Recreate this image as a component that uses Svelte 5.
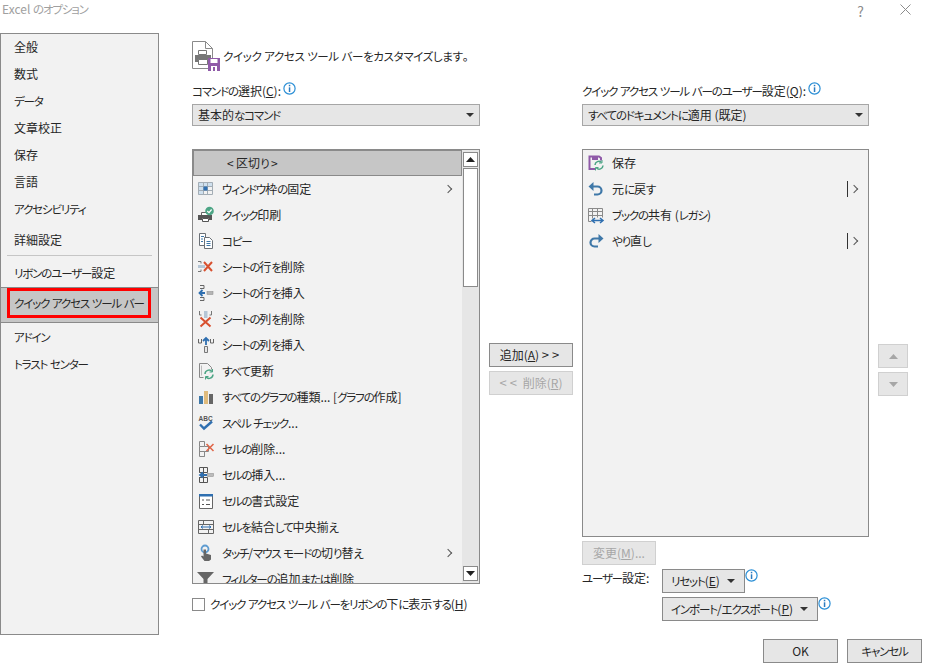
<script>
    const nav = [
        { label: '全般' },
        { label: '数式' },
        { label: 'データ' },
        { label: '文章校正' },
        { label: '保存' },
        { label: '言語' },
        { label: 'アクセシビリティ' },
        { label: '詳細設定', cls: 'gap-top' },
    ];
    const nav2 = [
        { label: 'リボンのユーザー設定' },
        { label: 'クイック アクセス ツール バー', active: true },
        { label: 'アドイン' },
        { label: 'トラスト センター' },
    ];

    const commands = [
        { icon: 'freeze', label: 'ウィンドウ枠の固定', more: true },
        { icon: 'print', label: 'クイック印刷' },
        { icon: 'copy', label: 'コピー' },
        { icon: 'delrow', label: 'シートの行を削除' },
        { icon: 'insrow', label: 'シートの行を挿入' },
        { icon: 'delcol', label: 'シートの列を削除' },
        { icon: 'inscol', label: 'シートの列を挿入' },
        { icon: 'refresh', label: 'すべて更新' },
        { icon: 'chart', label: 'すべてのグラフの種類... [グラフの作成]' },
        { icon: 'spell', label: 'スペル チェック...' },
        { icon: 'delcell', label: 'セルの削除...' },
        { icon: 'inscell', label: 'セルの挿入...' },
        { icon: 'format', label: 'セルの書式設定' },
        { icon: 'merge', label: 'セルを結合して中央揃え' },
        { icon: 'touch', label: 'タッチ/マウス モードの切り替え', more: true },
        { icon: 'filter', label: 'フィルターの追加または削除' },
    ];

    const toolbar = [
        { icon: 'savesync', label: '保存' },
        { icon: 'undo', label: '元に戻す', split: true },
        { icon: 'share', label: 'ブックの共有 (レガシ)' },
        { icon: 'redo', label: 'やり直し', split: true },
    ];

    // kana runs get set a bit narrower than the kanji around them
    function parts(text) {
        return text.split(/([\u3040-\u30ff]+)/).filter(Boolean);
    }
    const isKana = (s) => /^[\u3040-\u30ff]/.test(s);
</script>

{#snippet k(text)}{#each parts(text) as part}{#if isKana(part)}<span class="kana">{part}</span>{:else}{part}{/if}{/each}{/snippet}

{#snippet info()}
    <svg class="info" width="13" height="13" viewBox="0 0 13 13">
        <circle cx="6.500" cy="6.500" r="5.600" fill="#fff" stroke="#2b8fd6" stroke-width="1.200" />
        <rect x="5.800" y="2.800" width="1.500" height="1.500" fill="#2b7cc0" />
        <rect x="5.800" y="5.300" width="1.500" height="4.700" fill="#2b7cc0" />
    </svg>
{/snippet}

{#snippet caret()}
    <svg class="caret" width="8" height="4" viewBox="0 0 8 4"><path d="M0 0h8L4 4z" fill="#333" /></svg>
{/snippet}

{#snippet icon(name)}
    <svg class="ico" width="18" height="18" viewBox="0 0 18 18" fill="none">
        {#if name === 'freeze'}
            <path d="M1 2h15v4H1zM1 6h5v9H1z" fill="#cfe0ee" />
            <path d="M1.500 2.500h14v12h-14zM1.500 6.500h14M1.500 10.500h14M6.500 2.500v12M10.500 2.500v12" stroke="#a3adb5" />
            <rect x="6.500" y="6.500" width="4" height="4" fill="#2f6fb0" />
        {:else if name === 'print'}
            <path d="M4.500 6.500h7v3h-7z" fill="#fff" stroke="#666" />
            <path d="M1 9h14v5h-3v-2H5v2H1z" fill="#555" />
            <path d="M5.500 12.500h6v3h-6z" fill="#fff" stroke="#555" />
            <circle cx="12.500" cy="5" r="4.300" fill="#4ca585" />
            <path d="M10.300 5l1.700 1.700 2.600-3.200" stroke="#fff" stroke-width="1.200" />
        {:else if name === 'copy'}
            <path d="M2.500 1.500h6v12h-6z" fill="#fff" stroke="#6b7076" />
            <path d="M7.500 5.500h5l3 3v8h-8z" fill="#fff" stroke="#6b7076" />
            <path d="M4 4.500h3M4 7h2M4 9.500h2M9.500 9.500h4M9.500 11.500h4M9.500 13.500h4" stroke="#3f78a8" />
        {:else if name === 'delrow'}
            <path d="M1 3.500h3v2M1 13.500h3v-2" stroke="#777" />
            <rect x="1" y="7" width="7" height="3" fill="#b5c6d6" />
            <path d="M7 4l8 9M15 4l-8 9" stroke="#d8502f" stroke-width="2" />
        {:else if name === 'insrow'}
            <path d="M3 1.500h4v3H3M3 16.500h4v-3H3" stroke="#666" />
            <path d="M2 9h6M5.500 6l-3 3 3 3" stroke="#2f6fb0" stroke-width="1.800" />
            <rect x="10" y="7.500" width="6" height="3" fill="#b5b5b5" stroke="#888" stroke-width=".5" />
        {:else if name === 'delcol'}
            <path d="M2.500 1v4h2M14.500 1v4h-2" stroke="#777" />
            <rect x="7" y="1" width="3.500" height="7" fill="#b5c6d6" />
            <path d="M3.500 7.500l10 9M13.500 7.500l-10 9" stroke="#d8502f" stroke-width="2" />
        {:else if name === 'inscol'}
            <path d="M1.500 3v4h3V3M13.500 3v4h3V3" stroke="#666" />
            <path d="M9 9V2M6 5l3-3 3 3" stroke="#2f6fb0" stroke-width="1.800" />
            <path d="M7.500 10.500h3v6h-3z" fill="#e6e6e6" stroke="#777" />
        {:else if name === 'refresh'}
            <path d="M2.500 1.500h8l4 4v2M2.500 1.500v14h4" stroke="#888" />
            <path d="M4.500 3.500v10" stroke="#bbb" />
            <path d="M8 12a4 4 0 0 1 7-2.500M16 12.500a4 4 0 0 1-7 2.500" stroke="#4ca585" stroke-width="1.500" />
            <path d="M15.500 7v3h-3M8.500 17.500v-3h3" stroke="#4ca585" />
        {:else if name === 'chart'}
            <rect x="2" y="8" width="4" height="8" fill="#3f78a8" />
            <rect x="7" y="3" width="4" height="13" fill="#e0bb7c" />
            <rect x="12" y="6" width="4" height="10" fill="#666" />
        {:else if name === 'spell'}
            <text x="1.500" y="6.500" class="abc">ABC</text>
            <path d="M3 10.500l4 4 8-7" stroke="#2f6fb0" stroke-width="2.400" />
        {:else if name === 'delcell'}
            <path d="M2.500 1.500h5v5h-5zM2.500 6.500v10h5v-5h-5M7.500 6.500h4v5h-4M7.500 11.500v5" stroke="#888" />
            <path d="M9.500 4l7 7M16.500 4l-7 7" stroke="#e0674a" stroke-width="1.600" />
        {:else if name === 'inscell'}
            <path d="M2.500 1.500h8v5h-8zM6.500 1.500v5M2.500 6.500v10h8v-5h-8M6.500 6.500v10" stroke="#555" />
            <rect x="2" y="7" width="4" height="4" fill="#fff" />
            <path d="M3 9h7M6 6.500L3 9l3 2.500" stroke="#2f6fb0" stroke-width="1.800" />
            <rect x="10.500" y="7.500" width="6" height="3" fill="#bbb" stroke="#888" stroke-width=".5" />
        {:else if name === 'format'}
            <path d="M2.500 2.500h13v14h-13z" fill="#fff" stroke="#666" />
            <rect x="2" y="2" width="14" height="2.500" fill="#2f6fb0" />
            <path d="M5 8h2M5 12.500h2M9 8h4M9 12.500h4" stroke="#555" />
        {:else if name === 'merge'}
            <path d="M1.500 2.500h15v13h-15zM1.500 6.500h15M1.500 11.500h15M6.500 2.500v4M11.500 11.500v4" stroke="#666" />
            <path d="M4 9h10M6 7.500L4 9l2 1.500M12 7.500L14 9l-2 1.500" stroke="#2f6fb0" />
        {:else if name === 'touch'}
            <circle cx="8" cy="5" r="3.500" stroke="#5d9bd0" stroke-width="1.800" />
            <path d="M6.500 5.500h2.500v4l5 1.500v4.500l-2 1.500H7.500L4 12.500l1-1 1.500 1z" fill="#666" />
        {:else if name === 'filter'}
            <path d="M0 2h17l-6.500 7v9h-4V9z" fill="#666" />
        {:else if name === 'savesync'}
            <path d="M8 15H2.500V2.500H12l2 1.500v2.500" stroke="#8f5aa8" stroke-width="2" />
            <path d="M5 3h6v3H5z" fill="#8f5aa8" />
            <path d="M8 11a3.800 3.800 0 0 1 6.500-2.500M16 11.500a3.800 3.800 0 0 1-6.500 2.500" stroke="#4ca585" stroke-width="1.500" />
            <path d="M15 6v3h-3M8.500 16.500v-3h3" stroke="#4ca585" />
        {:else if name === 'undo'}
            <path d="M5 6.500h5.500a4 4 0 0 1 4 4 4 4 0 0 1-4 4H7" stroke="#3f78a8" stroke-width="2.200" />
            <path d="M6.500 2L1.500 6.500l5 4.500z" fill="#3f78a8" />
        {:else if name === 'share'}
            <path d="M1.500 2.500h14v9M1.500 2.500v13h3M1.500 5.500h14M5.500 2.500v10M10.500 2.500v9M1.500 9.500h14" stroke="#8a8a8a" />
            <path d="M5 14.500h11M8 12l-3 2.500L8 17M13 12l3 2.500-3 2.500" stroke="#2f6fb0" stroke-width="1.500" />
        {:else if name === 'redo'}
            <path d="M13 6.500H7.500a4 4 0 0 0-4 4 4 4 0 0 0 4 4H11" stroke="#3f78a8" stroke-width="2.200" />
            <path d="M11.500 2l5 4.500-5 4.500z" fill="#3f78a8" />
        {/if}
    </svg>
{/snippet}

<div class="window">
    <header class="titlebar">
        <span class="title">{@render k('Excel のオプション')}</span>
        <div class="winbtns">
            <span class="help">?</span>
            <svg width="11" height="11" viewBox="0 0 11 11"><path d="M.5.500l10 10M10.500.500l-10 10" stroke="#8c8c8c" fill="none" /></svg>
        </div>
    </header>

    <div class="body">
        <nav class="sidebar">
            {#each nav as item}
                <div class="nav-item {item.cls ?? ''}">{@render k(item.label)}</div>
            {/each}
            <hr />
            {#each nav2 as item}
                <div class="nav-item" class:active={item.active}>{@render k(item.label)}</div>
            {/each}
        </nav>

        <main class="main">
            <div class="heading">
                <svg width="28" height="31" viewBox="0 0 28 31" fill="none">
                    <path d="M.5.500h13l7 7v20H.500z" fill="#fff" stroke="#8a8a8a" />
                    <path d="M13.500.500v7h7" stroke="#8a8a8a" />
                    <path d="M6.500 9.500h8v4h-8z" fill="#fff" stroke="#777" />
                    <path d="M3 14h16v7h-3v-2H6v2H3z" fill="#777" />
                    <path d="M6.500 18.500h9v5h-9z" fill="#fff" stroke="#777" />
                    <rect x="16" y="17" width="12" height="13" fill="#8f5aa8" />
                    <rect x="18.500" y="18" width="7" height="4" fill="#fff" />
                    <rect x="19" y="25" width="6" height="5" fill="#fff" />
                    <rect x="21" y="26" width="2" height="4" fill="#8f5aa8" />
                </svg>
                <span>{@render k('クイック アクセス ツール バーをカスタマイズします。')}</span>
            </div>

            <div class="columns">
                <section class="col-left">
                    <div class="label"><span>{@render k('コマンドの選択(')}<u>C</u>):</span>{@render info()}</div>
                    <div class="select"><span>{@render k('基本的なコマンド')}</span>{@render caret()}</div>

                    <div class="list list-left">
                        <div class="rows">
                            <div class="row separator"><span>&lt;&thinsp;{@render k('区切り')}&thinsp;&gt;</span></div>
                            {#each commands as cmd}
                                <div class="row">
                                    {@render icon(cmd.icon)}
                                    <span class="text">{@render k(cmd.label)}</span>
                                    {#if cmd.more}
                                        <span class="chev"></span>
                                    {/if}
                                </div>
                            {/each}
                        </div>
                        <div class="scrollbar">
                            <div class="sb-btn"><svg width="9" height="5" viewBox="0 0 9 5"><path d="M0 5h9L4.500 0z" fill="#222" /></svg></div>
                            <div class="sb-thumb"></div>
                            <div class="sb-btn"><svg width="9" height="5" viewBox="0 0 9 5"><path d="M0 0h9L4.500 5z" fill="#222" /></svg></div>
                        </div>
                    </div>

                    <label class="check"><span class="box"></span><span>{@render k('クイック アクセス ツール バーをリボンの下に表示する(')}<u>H</u>)</span></label>
                </section>

                <section class="col-mid">
                    <button class="btn add"><span>追加(<u>A</u>) <span class="wide">&gt;&gt;</span></span></button>
                    <button class="btn add" disabled><span><span class="wide">&lt;&lt;</span> 削除(<u>R</u>)</span></button>
                </section>

                <section class="col-right">
                    <div class="label"><span>{@render k('クイック アクセス ツール バーのユーザー設定(')}<u>Q</u>):</span>{@render info()}</div>
                    <div class="select"><span>{@render k('すべてのドキュメントに適用 (既定)')}</span>{@render caret()}</div>

                    <div class="list list-right">
                        <div class="rows">
                            {#each toolbar as cmd}
                                <div class="row">
                                    {@render icon(cmd.icon)}
                                    <span class="text">{@render k(cmd.label)}</span>
                                    {#if cmd.split}
                                        <span class="split"></span><span class="chev"></span>
                                    {/if}
                                </div>
                            {/each}
                        </div>
                    </div>

                    <button class="btn modify" disabled><span>変更(<u>M</u>)...</span></button>

                    <div class="custom">
                        <span class="custom-label">{@render k('ユーザー設定:')}</span>
                        <div class="custom-btns">
                            <div class="btn-line"><button class="btn drop"><span>{@render k('リセット(')}<u>E</u>)</span>{@render caret()}</button>{@render info()}</div>
                            <div class="btn-line"><button class="btn drop"><span>{@render k('インポート/エクスポート(')}<u>P</u>)</span>{@render caret()}</button>{@render info()}</div>
                        </div>
                    </div>
                </section>

                <section class="col-arrows">
                    <button class="btn arrow" disabled aria-label="上へ"><svg width="9" height="5" viewBox="0 0 9 5"><path d="M0 5h9L4.500 0z" fill="#a6a6a6" /></svg></button>
                    <button class="btn arrow" disabled aria-label="下へ"><svg width="9" height="5" viewBox="0 0 9 5"><path d="M0 0h9L4.500 5z" fill="#a6a6a6" /></svg></button>
                </section>
            </div>
        </main>
    </div>

    <footer class="footer">
        <button class="btn foot">OK</button>
        <button class="btn foot"><span>{@render k('キャンセル')}</span></button>
    </footer>
</div>

<style>
    :global(body) {
        background: #fff;
    }

    .window {
        width: 926px;
        height: 666px;
        display: flex;
        flex-direction: column;
        overflow: hidden;
        font-family: "Noto Sans CJK JP", "Noto Sans", sans-serif;
        font-feature-settings: "palt";
        font-size: 12px;
        line-height: 16px;
        color: #262626;
        background: #fff;
    }

    .kana {
        font-size: 11.500px;
        letter-spacing: -1.150px;
    }

    .wide {
        font-size: 13px;
        letter-spacing: 3px;
    }

    .titlebar {
        height: 33px;
        flex: none;
        display: flex;
        justify-content: space-between;
        padding: 1px 15px 0 2px;
        box-sizing: border-box;
    }

    .title {
        color: #a0a0a0;
    }

    .winbtns {
        display: flex;
        gap: 36px;
        align-items: flex-start;
        padding-top: 3px;
    }

    .help {
        color: #8c8c8c;
        font-size: 14px;
        line-height: 14px;
    }

    .body {
        display: flex;
        height: 602px;
        flex: none;
    }

    .sidebar {
        width: 159px;
        flex: none;
        box-sizing: border-box;
        border: 1px solid #8a8a8a;
        background: #f2f2f2;
    }

    .nav-item {
        height: 27px;
        line-height: 25px;
        padding-left: 13px;
        white-space: nowrap;
    }

    .gap-top {
        margin-top: 4px;
    }

    .sidebar hr {
        border: 0;
        border-top: 1px solid #c6c6c6;
        margin: 1px 6px 4px 6px;
    }

    .nav-item.active {
        height: 36px;
        line-height: 30px;
        position: relative;
        background: #c6c6c6;
        box-sizing: border-box;
        border: 1px solid #8a8a8a;
        border-width: 1px 0;
        margin-bottom: 1px;
    }

    .active::after {
        content: "";
        position: absolute;
        left: 6px;
        top: 0;
        width: 144px;
        height: 30px;
        box-sizing: border-box;
        border: 3px solid #f00;
    }

    .main {
        margin-left: 33px;
        flex: none;
    }

    .heading {
        height: 50px;
        padding-top: 8px;
        box-sizing: border-box;
        display: flex;
        align-items: flex-start;
        gap: 3px;
    }

    .heading span {
        margin-top: 7px;
    }

    .heading span .kana {
        margin-top: 0;
        letter-spacing: -0.35px;
    }

    .columns {
        display: flex;
        gap: 9px;
    }

    .col-left {
        width: 288px;
        flex: none;
    }

    .col-mid {
        width: 84px;
        flex: none;
        display: flex;
        flex-direction: column;
        gap: 4px;
        padding-top: 260px;
    }

    .col-right {
        width: 287px;
        flex: none;
    }

    .col-arrows {
        width: 30px;
        flex: none;
        display: flex;
        flex-direction: column;
        gap: 4px;
        padding-top: 261px;
    }

    .label {
        height: 21px;
        display: flex;
        align-items: flex-start;
        white-space: nowrap;
    }

    .info {
        flex: none;
        margin-left: 2px;
        margin-top: -1px;
    }

    .select {
        height: 22px;
        box-sizing: border-box;
        border: 1px solid #a6a6a6;
        background: #e6e6e6;
        display: flex;
        align-items: center;
        justify-content: space-between;
        padding: 0 5px 0 5px;
    }

    .list {
        margin-top: 23px;
        box-sizing: border-box;
        border: 1px solid #8a8a8a;
        background: #f2f2f2;
        display: flex;
    }

    .list-left {
        height: 435px;
    }

    .list-right {
        height: 388px;
    }

    .rows {
        flex: 1;
        min-width: 0;
        overflow: hidden;
    }

    .row {
        height: 26px;
        display: flex;
        align-items: center;
        padding-left: 4px;
        white-space: nowrap;
        position: relative;
    }

    .row .text {
        margin-left: 7px;
        flex: none;
    }

    .ico {
        flex: none;
    }

    .abc {
        font-family: "Liberation Sans", sans-serif;
        font-size: 6.500px;
        font-weight: 700;
        fill: #555;
    }

    .separator {
        background: #c6c6c6;
        box-sizing: border-box;
        border: 1px solid #8a8a8a;
        padding-left: 33px;
    }

    .chev {
        width: 5px;
        height: 5px;
        border: solid #555;
        border-width: 1px 1px 0 0;
        transform: rotate(45deg);
        position: absolute;
        right: 11px;
        top: 10px;
    }

    .split {
        position: absolute;
        right: 20px;
        top: 5px;
        height: 16px;
        border-left: 1px solid #333;
    }

    .scrollbar {
        width: 17px;
        flex: none;
        background: #e6e6e6;
        display: flex;
        flex-direction: column;
        padding: 2px 1px;
        box-sizing: border-box;
    }

    .sb-btn {
        height: 15px;
        flex: none;
        box-sizing: border-box;
        background: #fff;
        border: 1px solid #8a8a8a;
        display: flex;
        align-items: center;
        justify-content: center;
    }

    .sb-thumb {
        height: 119px;
        flex: none;
        margin: 1px 0 auto;
        box-sizing: border-box;
        background: #fff;
        border: 1px solid #8a8a8a;
    }

    .check {
        margin-top: 12px;
        display: flex;
        align-items: center;
        white-space: nowrap;
        height: 16px;
    }

    .box {
        width: 13px;
        height: 13px;
        flex: none;
        box-sizing: border-box;
        border: 1px solid #8a8a8a;
        background: #fff;
        margin-right: 5px;
    }

    .btn {
        font: inherit;
        font-feature-settings: inherit;
        color: #262626;
        background: #e6e6e6;
        box-sizing: border-box;
        border: 1px solid #8a8a8a;
        border-radius: 0;
        padding: 0;
        height: 24px;
        display: flex;
        align-items: center;
        justify-content: center;
        white-space: nowrap;
    }

    .btn:disabled {
        color: #a6a6a6;
        border-color: #d0d0d0;
    }

    .add {
        width: 84px;
    }

    .modify {
        width: 74px;
        margin-top: 4px;
    }

    .arrow {
        width: 30px;
    }

    .custom {
        display: flex;
        margin-top: 4px;
    }

    .custom-label {
        width: 80px;
        flex: none;
        margin-top: 1px;
    }

    .custom-btns {
        display: flex;
        flex-direction: column;
        gap: 4px;
    }

    .btn-line {
        display: flex;
        align-items: flex-start;
    }

    .btn-line .info {
        margin-left: 0;
        margin-top: 0;
    }

    .drop {
        gap: 7px;
        padding: 0 9px 0 8px;
        justify-content: flex-start;
    }

    .footer {
        display: flex;
        justify-content: flex-end;
        gap: 9px;
        padding: 4px 4px 0 0;
    }

    .foot {
        width: 75px;
    }
</style>
